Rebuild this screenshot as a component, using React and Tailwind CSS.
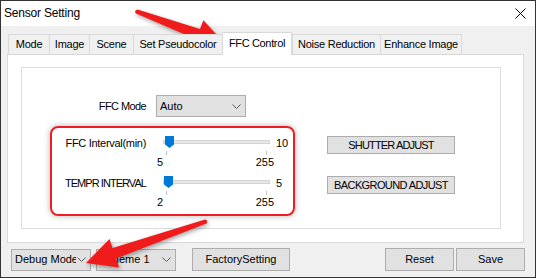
import React from "react";

const TABS = [
  { label: "Mode", w: "w-[42px]" },
  { label: "Image", w: "w-[41px]" },
  { label: "Scene", w: "w-[45px]" },
  { label: "Set Pseudocolor", w: "w-[90px]" },
  { label: "FFC Control", w: "w-[70px]", active: true },
  { label: "Noise Reduction", w: "w-[89px]" },
  { label: "Enhance Image", w: "w-[82px]" },
];

function Chevron() {
  return (
    <svg width="9" height="5" viewBox="0 0 9 5" className="shrink-0 ml-auto">
      <path d="M0.5 0.5 L4.5 4.5 L8.5 0.5" fill="none" stroke="#5a5a5a" strokeWidth="1" />
    </svg>
  );
}

function Combo({ text, className, textClass = "" }) {
  return (
    <div
      className={`flex items-center h-[22px] bg-[#e1e1e1] border border-[#adadad] pl-[3px] pr-[4px] ${className}`}
    >
      <span className={`overflow-hidden whitespace-nowrap ${textClass}`}>{text}</span>
      <Chevron />
    </div>
  );
}

function Slider({ label, labelClass, value, min, max }) {
  const left = ((value - min) / (max - min)) * 98;
  return (
    <div className="flex flex-col">
      <div className="flex items-center h-[12px]">
        <span className={`w-[124px] text-right whitespace-nowrap ${labelClass}`}>{label}</span>
        <div className="relative w-[107px] h-[12px] ml-[17px]">
          <div className="absolute left-0 right-0 top-[3px] h-[4px] bg-[#e7e7e7] border border-[#d4d4d4]" />
          <svg
            width="9"
            height="12"
            viewBox="0 0 9 12"
            className="absolute top-[-1px]"
            style={{ left: `${left}px` }}
          >
            <path d="M0 0 H9 V8.5 L4.5 12 L0 8.5 Z" fill="#0078d7" />
          </svg>
        </div>
        <span className="ml-[6px]">{value}</span>
      </div>
      <div className="flex justify-between w-[101px] ml-[144px] mt-[2px] h-[4px]">
        <span className="w-px h-[4px] bg-[#c2c2c2]" />
        <span className="w-px h-[4px] bg-[#c2c2c2]" />
      </div>
      <div className="flex justify-between w-[117px] ml-[135px] leading-[12px] mt-px">
        <span>{min}</span>
        <span>{max}</span>
      </div>
    </div>
  );
}

export default function App() {
  return (
    <div
      className="relative w-[536px] h-[278px] border border-[#333333] bg-[#f0f0f0] flex flex-col overflow-hidden text-[11px] leading-[13px] text-black"
      style={{ fontFamily: '"Liberation Sans", Arial, sans-serif' }}
    >
      {/* title bar */}
      <div className="h-[25px] bg-white flex items-center justify-between pl-[3px] pr-[9px] shrink-0">
        <span className="text-[12px] tracking-[-0.2px]">Sensor Setting</span>
        <svg width="11" height="11" viewBox="0 0 11 11">
          <path d="M0.5 0.5 L10.5 10.5 M10.5 0.5 L0.5 10.5" stroke="#000" strokeWidth="1" />
        </svg>
      </div>

      {/* tabs */}
      <div className="flex items-end ml-[7px] mt-[6px] relative z-10 shrink-0">
        {TABS.map((t) =>
          t.active ? (
            <div
              key={t.label}
              className={`${t.w} h-[23px] -mb-px bg-white border border-b-0 border-[#d9d9d9] flex items-center justify-center pb-[2px] tracking-[-0.35px]`}
            >
              {t.label}
            </div>
          ) : (
            <div
              key={t.label}
              className={`${t.w} h-[20px] bg-[#f0f0f0] border border-b-0 border-[#d9d9d9] -mr-px flex items-center justify-center tracking-[-0.25px]`}
            >
              {t.label}
            </div>
          )
        )}
      </div>

      {/* tab page */}
      <div className="ml-[6px] w-[517px] h-[189px] bg-white border border-[#d9d9d9] shrink-0">
        <div className="ml-[13px] mt-[12px] w-[480px] h-[162px] border border-[#dcdcdc]">
          <div className="flex items-center mt-[27px]">
            <span className="w-[124px] text-right tracking-[-0.6px]">FFC Mode</span>
            <Combo text="Auto" className="ml-[10px] w-[90px]" />
          </div>

          <div className="flex mt-[20px]">
            <div className="w-[280px] flex flex-col gap-[9px]">
              <Slider label="FFC Interval(min)" labelClass="tracking-[-0.3px]" value={10} min={5} max={255} />
              <Slider label="TEMPR INTERVAL" labelClass="tracking-[-0.95px]" value={5} min={2} max={255} />
            </div>
            <div className="ml-[25px] flex flex-col gap-[22px] -mt-px">
              <button className="w-[128px] h-[18px] bg-[#e1e1e1] border border-[#adadad] tracking-[-0.85px]">
                SHUTTER ADJUST
              </button>
              <button className="w-[128px] h-[18px] bg-[#e1e1e1] border border-[#adadad] tracking-[-0.6px]">
                BACKGROUND ADJUST
              </button>
            </div>
          </div>
        </div>
      </div>

      {/* bottom bar */}
      <div className="flex items-center mt-[5px] h-[23px] shrink-0">
        <Combo text="Debug Mode" textClass="w-[61px]" className="ml-[10px] w-[80px]" />
        <Combo text="Scheme 1" className="ml-[5px] w-[80px]" />
        <button className="ml-[16px] w-[98px] h-[23px] bg-[#e1e1e1] border border-[#adadad]">
          FactorySetting
        </button>
        <button className="ml-[95px] w-[69px] h-[23px] bg-[#e1e1e1] border border-[#adadad]">
          Reset
        </button>
        <button className="ml-[2px] w-[69px] h-[23px] bg-[#e1e1e1] border border-[#adadad]">
          Save
        </button>
      </div>

      {/* annotation: red frame */}
      <div className="absolute left-[49px] top-[125px] w-[245px] h-[90px] border-2 border-[#ee1c24] rounded-[8px] shadow-[0_0_6px_rgba(0,0,0,0.3)] pointer-events-none" />

      {/* annotation: arrows */}
      <svg
        width="536"
        height="278"
        viewBox="0 0 536 278"
        className="absolute left-[-1px] top-[-1px] pointer-events-none drop-shadow-[1px_2px_2px_rgba(0,0,0,0.35)]"
      >
        <path
          d="M137.5 9.5 L200 29.1 L203.4 20.2 L226 45 L192.6 48.2 L196 39.3 L136 13.5 Q133.5 11 137.5 9.5 Z"
          fill="#f01b1b"
        />
        <path
          d="M205 219.5 L112.6 248 L109.5 239 L86 263 L119.2 267.4 L116.1 258.4 L206.5 223.5 Q208.5 220.5 205 219.5 Z"
          fill="#f01b1b"
        />
      </svg>
    </div>
  );
}
